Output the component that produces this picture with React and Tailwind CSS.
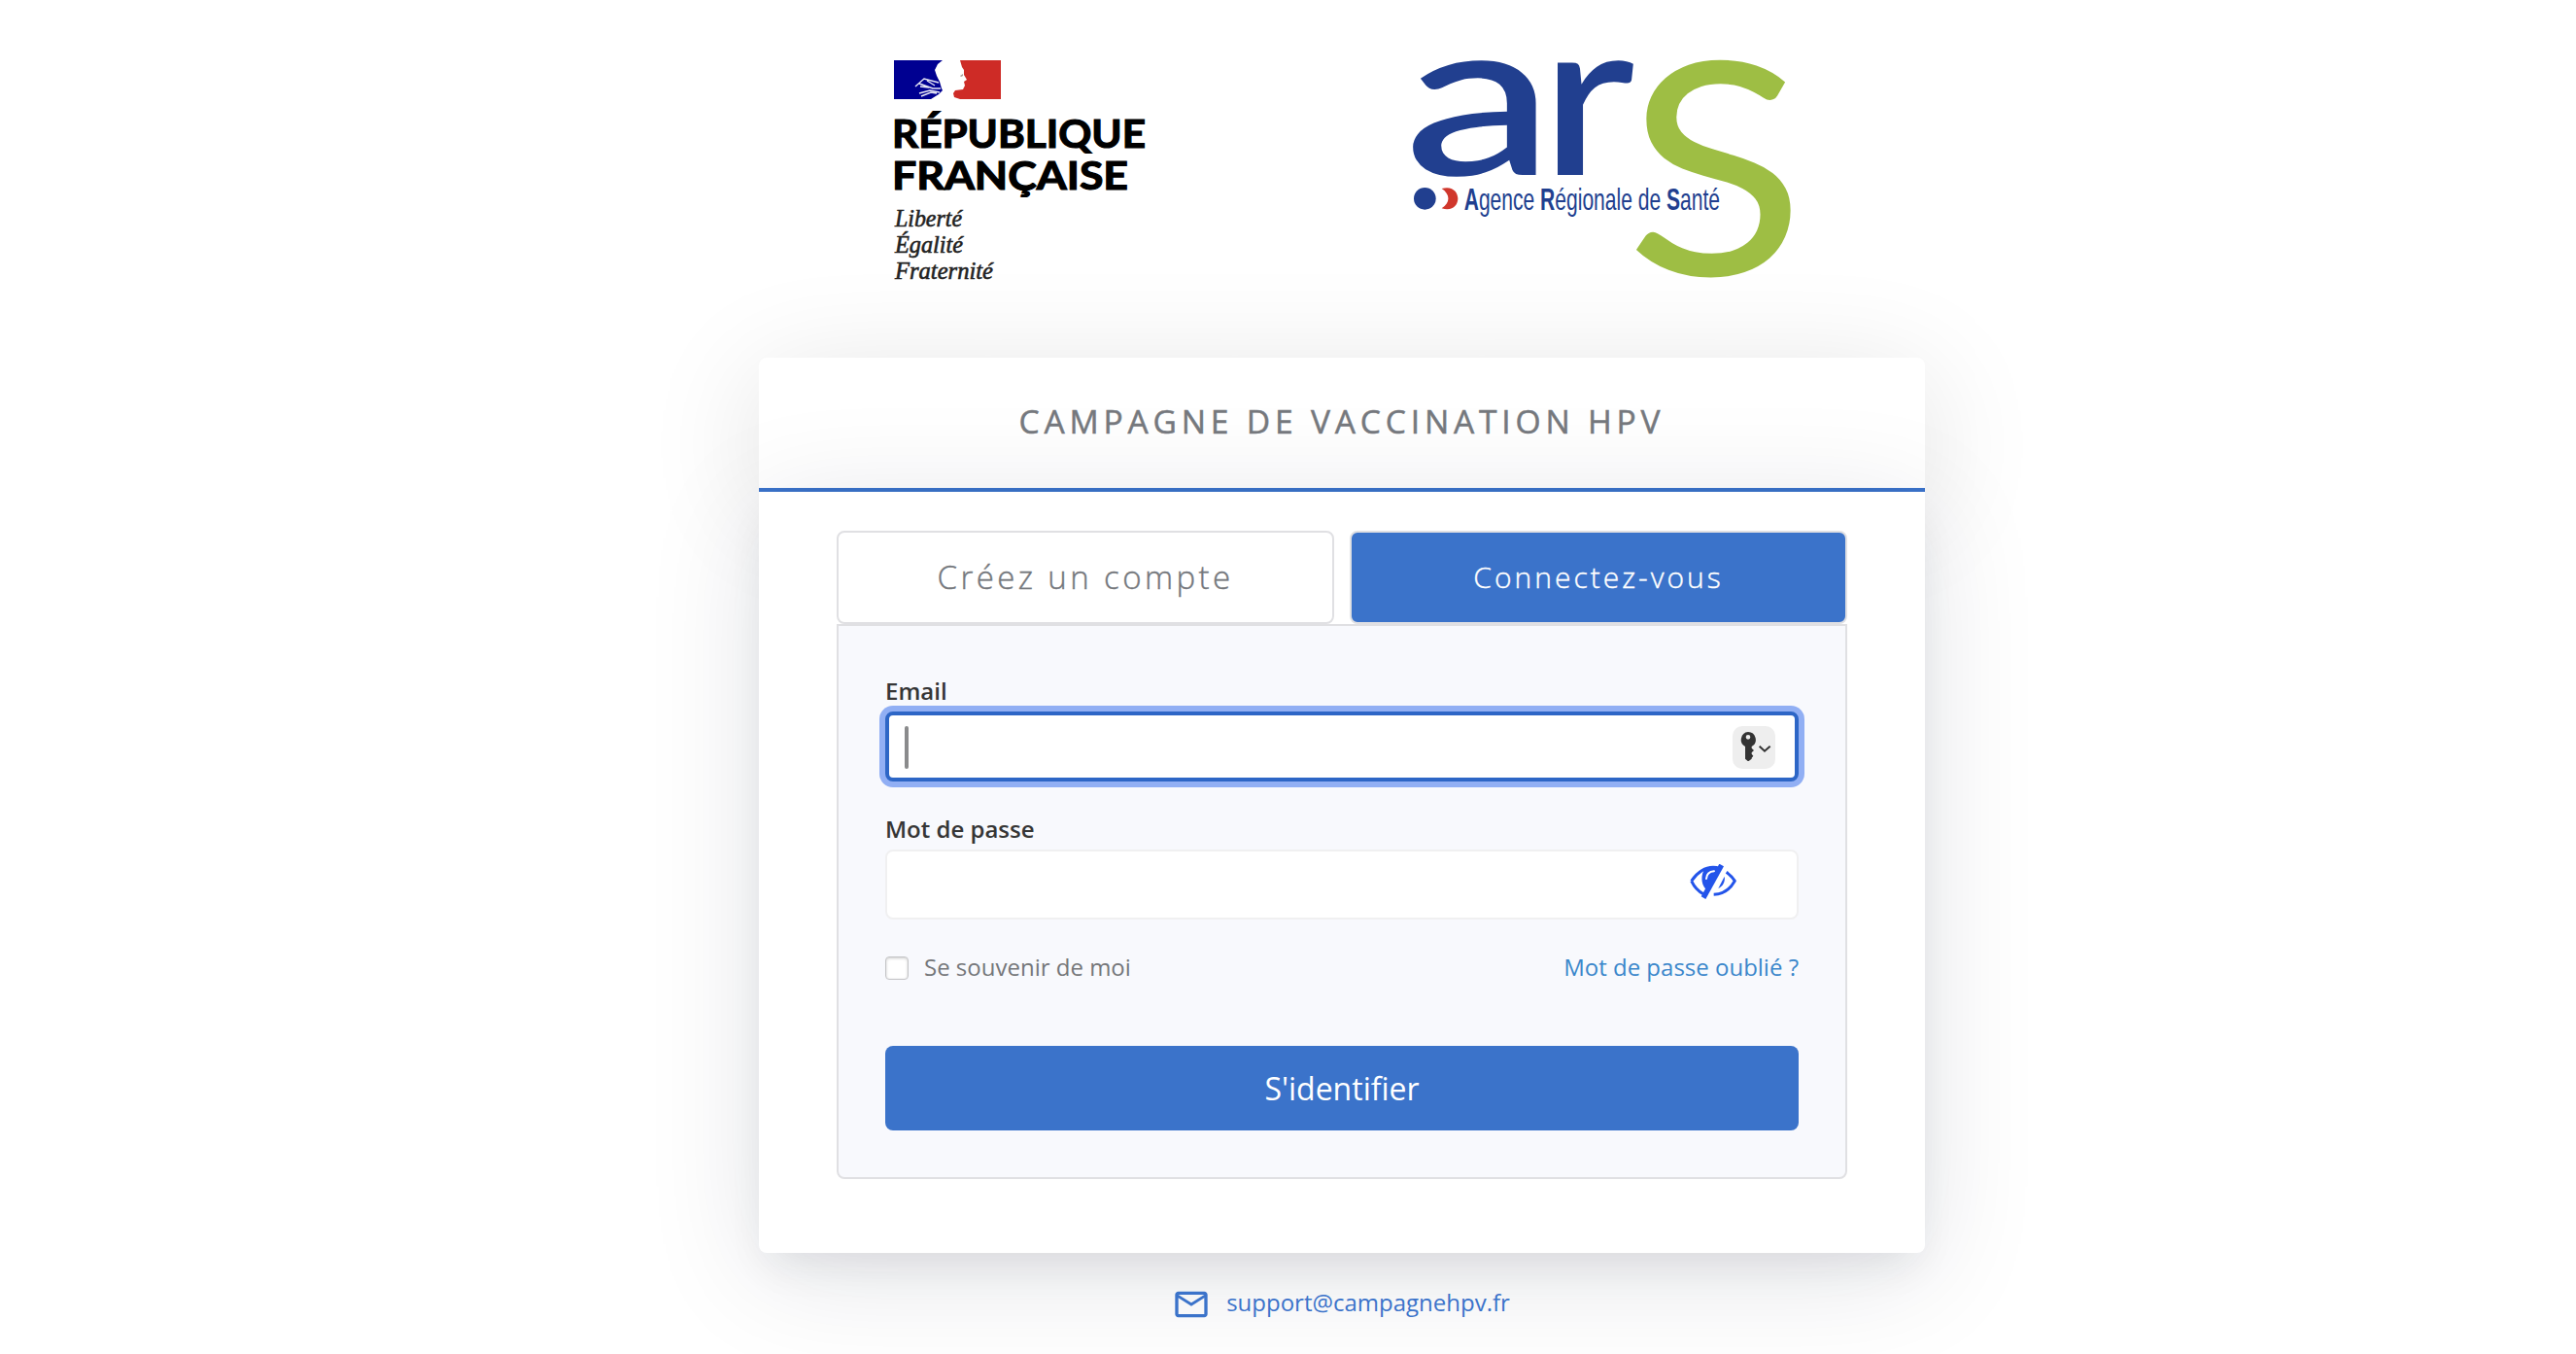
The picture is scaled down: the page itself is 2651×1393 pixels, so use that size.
import React, { useState } from 'react';
import { MdOutlineEmail } from 'react-icons/md';

const RepubliqueLogo = () => (
  <svg width="258" height="226" viewBox="0 0 258 226" className="overflow-visible" role="img" aria-label="République Française">
    {/* flag */}
    <rect width="110" height="40" fill="#fff" />
    <path d="M0 0H50L45 4L42 10L44 16L47 22L49 29L50 31L46 35L38 40H0Z" fill="#000091" />
    <path
      d="M22 27L31 19L46 23M26 24L40 29L48 29M27 27L36 28M26 34L37 31L47 33M28 37L38 33L44 34M34 21L42 26"
      stroke="#e8e8f6"
      strokeWidth="1.4"
      fill="none"
    />
    <path
      d="M68 0H110V40H68L62 38L61 34L63 31L71 30L73 26L72 22L75 20L72 15L72 10L70 7Z"
      fill="#ce2b26"
    />
    <path d="M68 16l3-2v2l-2 1z" fill="#a9a09a" />
    <g fontFamily="Lato, sans-serif" fontWeight="700" fontSize="41" fill="#000" stroke="#000" strokeWidth="1.2">
      <text x="-2" y="90" textLength="261" lengthAdjust="spacingAndGlyphs">RÉPUBLIQUE</text>
      <text x="-2" y="133" textLength="243" lengthAdjust="spacingAndGlyphs">FRANÇAISE</text>
    </g>
    <g fontFamily="Liberation Serif, serif" fontStyle="italic" fontSize="26" fill="#222" stroke="#222" strokeWidth="0.6">
      <text x="1" y="171" textLength="69" lengthAdjust="spacingAndGlyphs">Liberté</text>
      <text x="1" y="198" textLength="70" lengthAdjust="spacingAndGlyphs">Égalité</text>
      <text x="1" y="225" textLength="101" lengthAdjust="spacingAndGlyphs">Fraternité</text>
    </g>
  </svg>
);

const ArsLogo = () => (
  <svg width="440" height="260" viewBox="0 0 1320 780" className="overflow-visible" role="img" aria-label="Agence Régionale de Santé">
    <g fill="#213f8f" fontFamily="Lato, sans-serif" fontWeight="500" fontSize="682">
      <text x="44" y="420" textLength="466" lengthAdjust="spacingAndGlyphs">a</text>
      <text x="464" y="420" textLength="294" lengthAdjust="spacingAndGlyphs">r</text>
    </g>
    <text x="728" y="729" fill="#9ebe44" fontFamily="Lato, sans-serif" fontSize="916" textLength="556" lengthAdjust="spacingAndGlyphs">S</text>
    <circle cx="109" cy="493" r="34" fill="#213f8f" />
    <path d="M161 462C195 452 211 474 211 493C211 514 194 533 161 523C188 506 188 480 161 462Z" fill="#d0372c" />
    <g transform="translate(230 527) scale(0.672 1)" fill="#213f8f" fontFamily="Liberation Sans, sans-serif" fontSize="94">
      <text>
        <tspan fontWeight="700">A</tspan>gence <tspan fontWeight="700">R</tspan>égionale de <tspan fontWeight="700">S</tspan>anté
      </text>
    </g>
  </svg>
);

const EyeSlash = () => (
  <svg width="48" height="36" viewBox="0 0 144 108" fill="none">
    <path d="M5 52C24 25 48 10 72 10C80 10 86 11 92 13M43 93C28 85 15 73 5 52" stroke="#2354ea" strokeWidth="9" strokeLinejoin="round" />
    <path d="M46 16C34 32 34 60 48 76L55 82L92 10C74 6 58 8 46 16Z" fill="#2354ea" />
    <path d="M51 45C52 31 60 23 75 22" stroke="#fff" strokeWidth="6" strokeLinecap="round" />
    <path d="M42 104L98 3" stroke="#2354ea" strokeWidth="16" />
    <path d="M113 25C124 33 132 41 139 52C124 79 103 93 74 94" stroke="#2354ea" strokeWidth="9" strokeLinejoin="round" />
    <path d="M107 38C110 52 103 68 88 75Z" fill="#2354ea" />
  </svg>
);

const KeyButton = () => (
  <button type="button" className="mt-0.5 flex h-11 w-11 items-center justify-center rounded-[10px] bg-[#eeeeee]">
    <svg width="44" height="44" viewBox="0 0 132 132" fill="none">
      <path
        fillRule="evenodd"
        d="M48 18a24 24 0 0 1 11 45v5l7 7-7 7v4l5 6-5 6v3l-9 7h-3l-8-7V63A24 24 0 0 1 48 18Zm0 9a7 7 0 1 0 0 14a7 7 0 0 0 0-14Z"
        fill="#333"
      />
      <path d="M83 62L99 77L116 62" stroke="#333" strokeWidth="6" />
    </svg>
  </button>
);

const App = () => {
  const [email, setEmail] = useState('');
  const [password, setPassword] = useState('');
  const [remember, setRemember] = useState(false);

  const handleSubmit = (e) => {
    e.preventDefault();
  };

  return (
    <div className="h-[1393px] overflow-hidden bg-white pl-[111px] font-['Open_Sans',sans-serif]">
      <div className="mx-auto w-[1200px]">
        {/* Logos */}
        <div className="flex h-[368px] items-start justify-between pt-10 pr-[111px] pl-[139px]">
          <div className="pt-[22px]">
            <RepubliqueLogo />
          </div>
          <ArsLogo />
        </div>

        <div>
          <div className="flex h-[138px] items-center justify-center rounded-t-lg border-b-4 border-[#3b73ca] bg-white pb-0.5 shadow-[0_20px_120px_rgba(0,0,0,0.12)]">
            <h1 className="text-[33.6px] leading-none font-medium tracking-[4.8px] text-[#75787d] [-webkit-text-stroke:0.5px_#75787d]">
              CAMPAGNE DE VACCINATION HPV
            </h1>
          </div>

          {/* Card body */}
          <div className="rounded-b-lg bg-white px-20 pt-10 pb-[76px] shadow-[0_20px_120px_rgba(20,25,50,0.12),0_20px_40px_-10px_rgba(30,35,60,0.09)]">
            <div className="flex gap-4">
              <button type="button" className="h-24 flex-1 rounded-lg border-2 border-[#e0e0e3] text-[33px] font-light tracking-[3.4px] text-[#75787d] [-webkit-text-stroke:0.4px_#75787d]">
                Créez un compte
              </button>
              <button type="button" className="h-24 flex-1 rounded-lg border-2 border-[#e0e0e3] bg-[#3b73ca] pb-0.5 text-[30px] font-light tracking-[3px] text-white [-webkit-text-stroke:0.4px_white]">
                Connectez-vous
              </button>
            </div>

            <form onSubmit={handleSubmit} className="rounded-b-lg border-2 border-[#e0e0e3] bg-[#f8f9fd] px-12 pt-[49px] pb-12">
              <label className="block text-2xl leading-9 font-semibold text-[#363636]" htmlFor="email">Email</label>
              <div className="mt-[3px] flex h-[72px] items-center justify-between rounded-lg border-4 border-[#2d66c6] bg-white pr-5 pl-4 ring-6 ring-[#91aff4]">
                <span className="mt-0.5 h-11 w-1 rounded-sm bg-[#8a8b8c]"></span>
                <input
                  id="email"
                  type="email"
                  value={email}
                  onChange={(e) => setEmail(e.target.value)}
                  className="flex-1 text-2xl outline-none"
                />
                <KeyButton />
              </div>

              <label className="mt-[31px] block text-2xl leading-9 font-semibold text-[#363636]" htmlFor="password">Mot de passe</label>
              <div className="mt-[3px] flex h-[72px] items-center rounded-lg border-2 border-[#f0f0f1] bg-white pr-[62px] pb-1.5 pl-4">
                <input
                  id="password"
                  type="password"
                  value={password}
                  onChange={(e) => setPassword(e.target.value)}
                  className="flex-1 text-2xl outline-none"
                />
                <EyeSlash />
              </div>

              <div className="mt-8 flex h-9 items-center justify-between text-2xl">
                <label className="flex items-center gap-4 text-[#75777a]">
                  <input
                    type="checkbox"
                    checked={remember}
                    onChange={(e) => setRemember(e.target.checked)}
                    className="h-6 w-6 appearance-none rounded border border-[#c4c4c6] bg-white shadow-[inset_0_1px_3px_rgba(0,0,0,0.2)]"
                  />
                  <span className="pb-0.5">Se souvenir de moi</span>
                </label>
                <a href="#" className="pb-0.5 text-[#3b87cb]">Mot de passe oublié ?</a>
              </div>

              <button type="submit" className="mt-[62px] h-[87px] w-full rounded-lg bg-[#3b73ca] text-[32px] text-white">
                S'identifier
              </button>
            </form>
          </div>
        </div>

        {/* Support */}
        <div className="mt-8 flex h-10 items-center justify-center gap-4 pt-px pr-0.5 text-2xl text-[#3b73ca]">
          <MdOutlineEmail size={40} />
          <a href="mailto:support@campagnehpv.fr" className="-mt-1">support@campagnehpv.fr</a>
        </div>
      </div>
    </div>
  );
};

export default App;
